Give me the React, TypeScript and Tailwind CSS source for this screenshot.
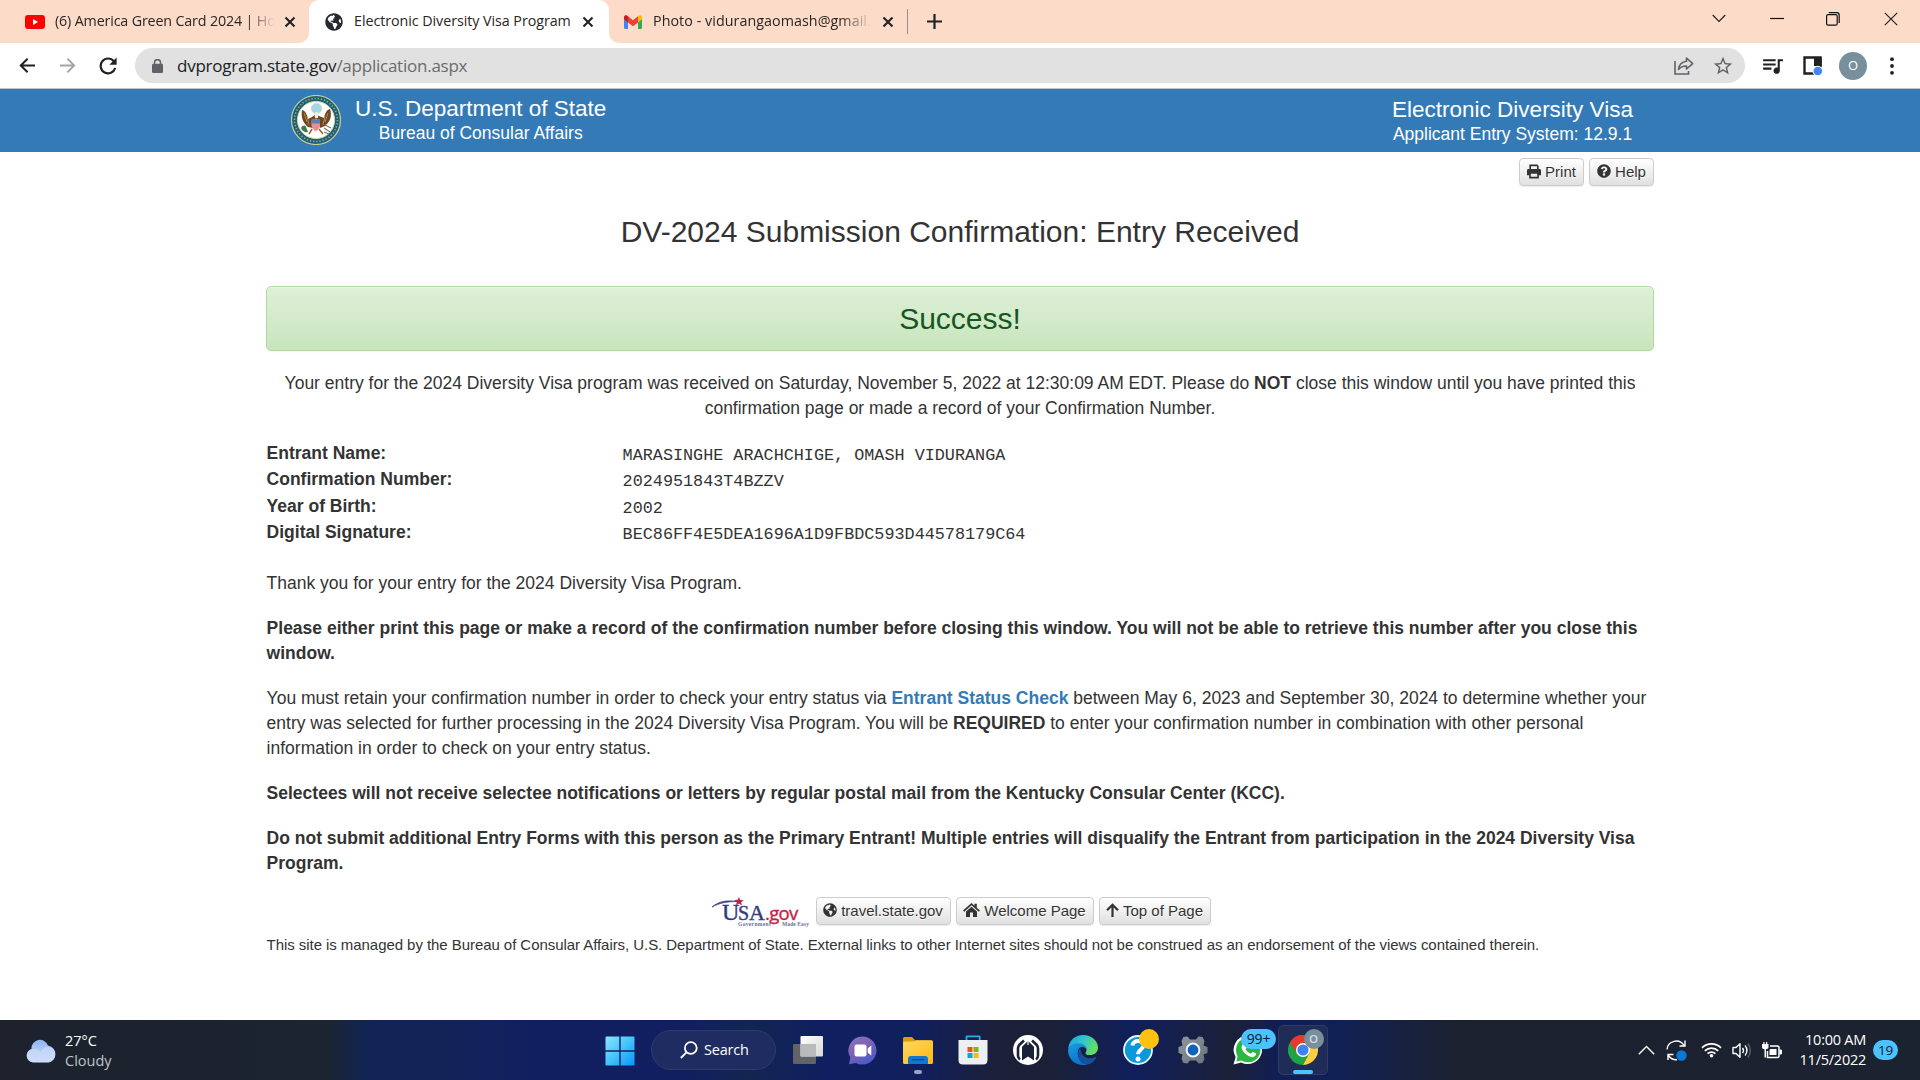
import React from "react";
import type { ReactNode } from "react";
import { FaGlobeAmericas, FaQuestionCircle } from "react-icons/fa";
import { MdOutlineStarBorder, MdQueueMusic } from "react-icons/md";

function CloseX() {
  return (
    <svg width="12" height="12" viewBox="0 0 12 12" className="shrink-0">
      <path d="M1.5 1.5 10.5 10.5M10.5 1.5 1.5 10.5" stroke="#202124" strokeWidth="2.1" />
    </svg>
  );
}

function TabStrip() {
  return (
    <div className="flex h-[43px] w-full bg-[#fddbc9] font-['Open_Sans','Noto_Sans',sans-serif] text-[14.3px] text-[#2b2523]">
      <div className="h-full w-[309px] bg-white">
        <div className="flex h-full items-center rounded-br-[10px] bg-[#fddbc9] pl-[25px]">
          <svg width="20" height="14" viewBox="0 0 20 14" className="shrink-0">
            <rect width="20" height="14" rx="3" fill="#f00" />
            <path d="M8 4v6l5-3z" fill="#fff" />
          </svg>
          <div className="-mt-[2px] ml-[10px] w-[220px] overflow-hidden whitespace-nowrap tracking-[-0.16px] [mask-image:linear-gradient(to_right,black_87%,transparent_100%)]">
            (6) America Green Card 2024 | Ho
          </div>
          <div className="ml-[9px] flex">
            <CloseX />
          </div>
        </div>
      </div>
      <div className="h-full w-[300px] bg-[#fddbc9]">
        <div className="flex h-full items-center rounded-t-[10px] bg-white pl-[16px]">
          <FaGlobeAmericas size={18} color="#27292d" className="shrink-0" />
          <div className="-mt-[2px] ml-[11px] w-[219px] whitespace-nowrap tracking-[-0.06px]">
            Electronic Diversity Visa Program
          </div>
          <div className="ml-[9px] flex">
            <CloseX />
          </div>
        </div>
      </div>
      <div className="h-full w-[299px] bg-white">
        <div className="flex h-full items-center rounded-bl-[10px] bg-[#fddbc9] pl-[15px]">
          <svg width="18" height="14" viewBox="0 0 18 14" className="shrink-0">
            <path d="M0 3v9.5Q0 14 1.4 14H4V5z" fill="#4285f4" />
            <path d="M14 5v9h2.600Q18 14 18 12.500V3z" fill="#34a853" />
            <path d="M14 1.300V7.400l4-3.200V2.200C18 0 16 -.3 14.800 .6z" fill="#fbbc04" />
            <path d="M0 2.200C0 0 2-.3 3.200 .6L4 1.300V7.400L0 4.200z" fill="#c5221f" />
            <path d="M4 1.300 9 5.200 14 1.300V7.400L9 11.200 4 7.400z" fill="#ea4335" />
          </svg>
          <div className="-mt-[2px] ml-[11px] w-[218px] overflow-hidden whitespace-nowrap tracking-[0.05px] [mask-image:linear-gradient(to_right,black_86%,transparent_100%)]">
            Photo - vidurangaomash@gmail.
          </div>
          <div className="ml-[11px] flex">
            <CloseX />
          </div>
          <div className="ml-[13px] h-[25px] w-px bg-[#a08d84]" />
        </div>
      </div>
      <div className="flex grow items-center pl-[19px]">
        <svg width="15" height="15" viewBox="0 0 15 15">
          <path d="M7.500 0V15M0 7.500H15" stroke="#202124" strokeWidth="2.200" />
        </svg>
      </div>
      <div className="flex h-[37px] items-center gap-[44px] pr-[22px]">
        <svg width="14" height="12" viewBox="0 0 14 12" fill="none" stroke="#222" className="ml-[1px]">
          <path d="M.7 2 7 8.300 13.300 2" strokeWidth="1.200" />
        </svg>
        <svg width="14" height="12" viewBox="0 0 14 12">
          <path d="M0 5.500H14" stroke="#111" strokeWidth="1.200" />
        </svg>
        <svg width="14" height="14" viewBox="0 0 14 14" fill="none" stroke="#111" strokeWidth="1.200" className="-ml-[2px]">
          <rect x=".6" y="2.600" width="10.600" height="10.600" rx="1.500" />
          <path d="M2.800 .7H10.800Q13.200 .7 13.200 3.200V11" />
        </svg>
        <svg width="14" height="14" viewBox="0 0 14 14">
          <path d="M.8.8 13.200 13.200M13.200.8.8 13.200" stroke="#222" strokeWidth="1.200" />
        </svg>
      </div>
    </div>
  );
}

function Toolbar() {
  return (
    <div className="flex h-[46px] w-full items-center border-b border-[#c3c6c6] bg-white">
      <svg width="16" height="16" viewBox="0 0 16 16" fill="none" stroke="#202124" strokeWidth="2" className="ml-[19px]">
        <path d="M16 7.500H1.800M8.600.7 1.800 7.500l6.800 6.800" />
      </svg>
      <svg width="16" height="16" viewBox="0 0 16 16" fill="none" stroke="#a2a3a5" strokeWidth="1.800" className="ml-[25px]">
        <path d="M0 7.500H14.200M7.400.7 14.200 7.500l-6.800 6.800" />
      </svg>
      <svg width="18" height="18" viewBox="0 0 18 18" fill="none" className="ml-[23px]">
        <path d="M14.800 4.200A7.400 7.400 0 1 0 16.200 11" stroke="#202124" strokeWidth="2.200" />
        <path d="M17.600 .6V7.800H10.400z" fill="#202124" />
      </svg>
      <div className="ml-[18px] flex h-[35px] w-[1610px] items-center rounded-full bg-[#e1e1e1] pl-[17px]">
        <svg width="11" height="14" viewBox="0 0 11 14">
          <rect y="4.800" width="11" height="9.200" rx="1.300" fill="#5f6368" />
          <path d="M2.500 5.500V3.700a3 3 0 0 1 6 0v1.800" fill="none" stroke="#5f6368" strokeWidth="1.500" />
        </svg>
        <div className="ml-[14px] font-['Open_Sans','Noto_Sans',sans-serif] text-[17px] tracking-[-0.24px] text-[#202124]">
          dvprogram.state.gov<span className="text-[#6a6b6e]">/application.aspx</span>
        </div>
        <svg width="20" height="18" viewBox="0 0 20 18" fill="none" stroke="#5f6368" strokeWidth="1.600" className="ml-auto">
          <path d="M1 4V17H14.500V14" />
          <path d="M12.500 1 18.700 6.700 12.500 12V9C9 9 6.500 10 4.500 12.500 5 8 8 4.800 12.500 4.300z" strokeLinejoin="round" />
        </svg>
        <MdOutlineStarBorder size={22} color="#5f6368" className="ml-[18px] mr-[11px]" />
      </div>
      <MdQueueMusic size={25} color="#202124" className="ml-[15px]" />
      <svg width="20" height="20" viewBox="0 0 20 20" className="ml-[18px]">
        <path d="M1.500 1.500H17.500V17.500H1.500z" fill="none" stroke="#202124" strokeWidth="2.400" />
        <path d="M11 1H18.700V10H11z" fill="#202124" />
        <circle cx="14.800" cy="15" r="5.300" fill="#fff" />
        <circle cx="14.800" cy="15" r="4.300" fill="#4285f4" />
      </svg>
      <div className="ml-[16px] flex h-7 w-7 items-center justify-center rounded-full bg-[#78909c] font-['Open_Sans',sans-serif] text-[13px] text-white">
        O
      </div>
      <svg width="4" height="18" viewBox="0 0 4 18" className="ml-[23px]" fill="#202124">
        <circle cx="2" cy="2.200" r="1.900" />
        <circle cx="2" cy="9" r="1.900" />
        <circle cx="2" cy="15.800" r="1.900" />
      </svg>
    </div>
  );
}

function Seal() {
  return (
    <svg width="50" height="50" viewBox="0 0 50 50">
      <circle cx="25" cy="25" r="24.500" fill="#1f6076" stroke="#c9cf93" strokeWidth="1.200" />
      <circle cx="25" cy="25" r="21.500" fill="none" stroke="#8fae93" strokeWidth="1.600" strokeDasharray="1.300 1.900" />
      <circle cx="25" cy="25" r="18.600" fill="#fff" stroke="#d5d39a" />
      <circle cx="25.500" cy="13.500" r="5.200" fill="#a4d4ea" stroke="#d9dcb4" />
      <path d="M11 15c-1 6 0 12 6 17l5 1 3-10 4 10 5-2c6-5 7-11 5-17-4 1-5 5-6 9l-5-2-3-2-4 3-4 2c-1-4-2-8-6-9z" fill="#6f4623" />
      <path d="M13 18l3 9M37 18l-3 9M16 21l2 9M34 21l-2 9" stroke="#c39a5c" strokeWidth=".8" />
      <path d="M21 34l-3 5M28 34l4 5" stroke="#8b6a2b" strokeWidth="1.500" />
      <path d="M10 33c2-3 4-3 5-1l2 5c-3 1-6-1-7-4z" fill="#3f7a49" />
      <path d="M33 33l6 4M33 37l5 2M34 30l6 3" stroke="#777d76" strokeWidth="1.200" />
      <path d="M20.500 24.500H29V31q-1 4-4.200 5.500Q21.500 35 20.500 31z" fill="#e88f94" />
      <path d="M20.500 24.500H29V28.500H20.500z" fill="#5b7fb3" />
      <path d="M23.500 18l2-1.500 2 1.500-.5 5h-3z" fill="#f0efe2" />
    </svg>
  );
}

function PrintGlyph() {
  return (
    <svg width="14" height="15" viewBox="0 0 15 15">
      <path d="M2.500 0H11L12.500 1.500V5H2.500zM4.300 1.800V5H10.700V1.800z" fill="#333" fillRule="evenodd" />
      <path d="M1.500 4.800H13.500Q15 4.800 15 6.300V11.500H12.700V15H2.300V11.500H0V6.300Q0 4.800 1.500 4.800zM4.100 9.800V13.200H10.900V9.800z" fill="#333" fillRule="evenodd" />
    </svg>
  );
}

function HomeGlyph() {
  return (
    <svg width="17" height="14" viewBox="0 0 17 14" fill="#333">
      <path d="M0 7.600 8.500 0 11.500 2.700V.7h2.300v4L17 7.600l-1.200 1.200L8.500 2.300 1.200 8.800z" />
      <path d="M3 8.500 8.500 3.700 14 8.500V14H10V9.500H7V14H3z" />
    </svg>
  );
}

function ArrowUpGlyph() {
  return (
    <svg width="13" height="14" viewBox="0 0 13 14" fill="none" stroke="#333" strokeWidth="2.200">
      <path d="M6.500 14V1.800M1 7.200 6.500 1.700 12 7.200" />
    </svg>
  );
}

function Btn({ icon, children, className }: { icon: ReactNode; children: ReactNode; className: string }) {
  return (
    <button
      className={`flex h-[28px] shrink-0 items-center justify-center gap-[4px] whitespace-nowrap rounded-[4px] border border-[#ccc] bg-gradient-to-b from-white to-[#e0e0e0] pb-[2px] text-[15px] text-[#333] shadow-[0_1px_1px_rgba(0,0,0,0.075)] [text-shadow:0_1px_0_#fff] ${className}`}
    >
      {icon}
      <span>{children}</span>
    </button>
  );
}

function Row({ label, value }: { label: string; value: string }) {
  return (
    <div className="flex h-[26.25px]">
      <div className="w-[356px] font-bold leading-[25px]">{label}</div>
      <div className="pt-[2px] font-['Liberation_Mono',monospace] text-[16.8px] leading-[25px]">{value}</div>
    </div>
  );
}

function UsaGov() {
  return (
    <svg width="100" height="30" viewBox="0 0 100 30">
      <path d="M1 10C8 4 16 3 26 4.500 16 4.500 8 6 1 10z" fill="#3b4380" stroke="#3b4380" strokeWidth=".8" />
      <path d="M28 0l1.200 3 3.600.3-2.700 2 .9 3.200-3-1.900-3 1.700.8-3.200-2.500-2.200 3.500-.1z" fill="#c41f45" />
      <text y="23" fontFamily="Liberation Serif" fill="#343a7c" stroke="#343a7c" strokeWidth=".4">
        <tspan x="11" fontSize="24">U</tspan>
        <tspan x="27" fontSize="20">S</tspan>
        <tspan x="38" fontSize="22">A</tspan>
        <tspan x="54" fontFamily="Open Sans" fontSize="18.500" fill="#c41f45" stroke="#c41f45" letterSpacing="-.7">.gov</tspan>
      </text>
      <text y="28.500" fontFamily="Liberation Serif" fontWeight="bold" fontSize="5.500" fill="#6a70a0">
        <tspan x="27" letterSpacing=".35">Government</tspan>
        <tspan x="71" letterSpacing=".1">Made Easy</tspan>
      </text>
    </svg>
  );
}

function Page() {
  return (
    <div className="flex h-[931px] w-full flex-col bg-white font-['Liberation_Sans',Arial,sans-serif] text-[17.5px] leading-[25px] text-[#333]">
      <header className="flex h-[63px] w-full shrink-0 items-start bg-[#337ab7] pl-[291px] pr-[287px] text-white">
        <div className="pt-[6px]">
          <Seal />
        </div>
        <div className="ml-[14px] flex flex-col items-center whitespace-nowrap pt-[6px]">
          <div className="text-[22.5px] leading-[27px]">U.S. Department of State</div>
          <div className="leading-[23px]">Bureau of Consular Affairs</div>
        </div>
        <div className="ml-auto flex flex-col items-center whitespace-nowrap pt-[7px]">
          <div className="text-[22.5px] leading-[27px]">Electronic Diversity Visa</div>
          <div className="leading-[23px]">Applicant Entry System: 12.9.1</div>
        </div>
      </header>
      <main className="mx-auto flex w-[1388px] flex-col whitespace-nowrap">
        <div className="mt-[6px] flex justify-end gap-[5px]">
          <Btn icon={<PrintGlyph />} className="w-[65px]">Print</Btn>
          <Btn icon={<FaQuestionCircle size={14} />} className="w-[65px]">Help</Btn>
        </div>
        <h1 className="mt-[29px] text-center text-[30px] leading-[33px]">DV-2024 Submission Confirmation: Entry Received</h1>
        <div className="mt-[38px] flex h-[65px] items-center justify-center rounded-[5px] border border-[#b2dba1] bg-gradient-to-b from-[#dff0d8] to-[#c8e5bc] pb-[1px] text-[30px] text-[#155724] shadow-[inset_0_1px_0_rgba(255,255,255,0.25),0_1px_2px_rgba(0,0,0,0.05)]">
          Success!
        </div>
        <p className="mt-[20px] text-center">
          Your entry for the 2024 Diversity Visa program was received on Saturday, November 5, 2022 at 12:30:09 AM EDT. Please do{" "}
          <b>NOT</b> close this window until you have printed this
          <br />
          confirmation page or made a record of your Confirmation Number.
        </p>
        <div className="mt-[20px] pl-[0.6px]">
          <Row label="Entrant Name:" value="MARASINGHE ARACHCHIGE, OMASH VIDURANGA" />
          <Row label="Confirmation Number:" value="2024951843T4BZZV" />
          <Row label="Year of Birth:" value="2002" />
          <Row label="Digital Signature:" value="BEC86FF4E5DEA1696A1D9FBDC593D44578179C64" />
        </div>
        <div className="pl-[0.6px]">
          <p className="mt-[25px]">Thank you for your entry for the 2024 Diversity Visa Program.</p>
          <p className="mt-[20px] font-bold">
            Please either print this page or make a record of the confirmation number before closing this window. You will not be able to retrieve this number after you close this
            <br />
            window.
          </p>
          <p className="mt-[20px]">
            You must retain your confirmation number in order to check your entry status via{" "}
            <a className="font-bold text-[#337ab7]">Entrant Status Check</a> between May 6, 2023 and September 30, 2024 to determine whether your
            <br />
            entry was selected for further processing in the 2024 Diversity Visa Program. You will be <b>REQUIRED</b> to enter your confirmation number in combination with other personal
            <br />
            information in order to check on your entry status.
          </p>
          <p className="mt-[20px] font-bold">
            Selectees will not receive selectee notifications or letters by regular postal mail from the Kentucky Consular Center (KCC).
          </p>
          <p className="mt-[20px] font-bold">
            Do not submit additional Entry Forms with this person as the Primary Entrant! Multiple entries will disqualify the Entrant from participation in the 2024 Diversity Visa
            <br />
            Program.
          </p>
        </div>
        <div className="mt-[21px] flex items-start justify-center gap-[5px] pl-[1px]">
          <UsaGov />
          <Btn icon={<FaGlobeAmericas size={14} />} className="w-[135px]">travel.state.gov</Btn>
          <Btn icon={<HomeGlyph />} className="w-[138px]">Welcome Page</Btn>
          <Btn icon={<ArrowUpGlyph />} className="w-[112px]">Top of Page</Btn>
        </div>
        <p className="mt-[5px] pl-[0.6px] text-[15px] tracking-[-0.058px]">
          This site is managed by the Bureau of Consular Affairs, U.S. Department of State. External links to other Internet sites should not be construed as an endorsement of the views contained therein.
        </p>
      </main>
    </div>
  );
}

function Cell({ children, className = "" }: { children: ReactNode; className?: string }) {
  return <div className={`relative flex h-[60px] w-[55px] shrink-0 items-center justify-center ${className}`}>{children}</div>;
}

function Cloud() {
  return (
    <svg width="30" height="24" viewBox="0 0 30 24">
      <defs>
        <linearGradient id="cloudA" x1="0" y1="0" x2="0" y2="1">
          <stop offset="0" stopColor="#8fb4f0" />
          <stop offset="1" stopColor="#d7e4fb" />
        </linearGradient>
      </defs>
      <path d="M7 23.500a7 7 0 0 1-1.500-13.500A8.500 8.500 0 0 1 22 6.500 8.700 8.700 0 0 1 23 23.500z" fill="url(#cloudA)" />
      <path d="M7 23a6.500 6.500 0 0 1 0-13c4 0 6 1 8 3 2-4 5-6 8-5a7.700 7.700 0 0 1 0 15z" fill="#c9dafa" opacity=".75" />
    </svg>
  );
}

function Taskbar() {
  return (
    <div className="flex h-[60px] w-full bg-[linear-gradient(90deg,#1d222d_0%,#1b2430_17%,#112453_19%,#11235a_25%,#111f60_28%,#121f5f_36%,#122650_39%,#101f61_43%,#111f5c_48%,#1c2038_52%,#1a2038_55%,#101f5c_59%,#1b2038_64%,#101e58_67%,#112052_70%,#1c212f_76%,#1b2230_100%)] font-['Open_Sans','Noto_Sans',sans-serif] text-white">
      <div className="flex w-[591.5px] items-start pl-[26px]">
        <div className="pt-[19px]">
          <Cloud />
        </div>
        <div className="ml-[9px] pt-[11px] text-[14.500px] leading-[20px] tracking-[0px]">
          <div>27°C</div>
          <div className="text-[#bfc3c9]">Cloudy</div>
        </div>
      </div>
      <Cell>
        <svg width="30" height="30" viewBox="0 0 30 30" className="ml-[1px] mt-[1px]">
          <defs>
            <linearGradient id="winG" x1="0" y1="0" x2="1" y2="1">
              <stop offset="0" stopColor="#8fe3ff" />
              <stop offset=".5" stopColor="#43c4fb" />
              <stop offset="1" stopColor="#0a93fb" />
            </linearGradient>
          </defs>
          <path d="M1.500.5H14.300V14.300H.5V1.500q0-1 1-1zM15.700.5H28.500q1 0 1 1V14.300H15.700zM.5 15.700H14.300V29.500H1.500q-1 0-1-1zM15.700 15.700H29.500V28.500q0 1-1 1H15.700z" fill="url(#winG)" />
        </svg>
      </Cell>
      <div className="mx-[4.500px] mt-[10px] flex h-[40px] w-[125px] shrink-0 items-center rounded-full border border-[#2c3a70] bg-[#1f2c62] pl-[28px] text-[14.500px] tracking-[-0.2px]">
        <svg width="18" height="18" viewBox="0 0 18 18" fill="none" stroke="#fff" strokeWidth="1.800">
          <circle cx="10.800" cy="7" r="5.900" />
          <path d="M6.500 11.300.8 17" />
        </svg>
        <span className="ml-[6px]">Search</span>
      </div>
      <Cell>
        <svg width="30" height="28" viewBox="0 0 30 28">
          <defs>
            <linearGradient id="tv" x1="0" y1="0" x2="1" y2="1">
              <stop offset="0" stopColor="#fff" />
              <stop offset="1" stopColor="#d8d8d8" />
            </linearGradient>
          </defs>
          <rect x="0" y="8" width="23" height="20" rx="1" fill="#626366" />
          <rect x="7.500" y="0" width="22.500" height="20.500" rx="1" fill="url(#tv)" />
          <rect x="7.500" y="8" width="15.500" height="12.500" fill="#b9babb" />
        </svg>
      </Cell>
      <Cell>
        <svg width="29" height="29" viewBox="0 0 29 29" className="-ml-[1px]">
          <defs>
            <linearGradient id="chat" x1="0" y1="0" x2=".6" y2="1">
              <stop offset="0" stopColor="#6f7fd0" />
              <stop offset=".35" stopColor="#8666b0" />
              <stop offset="1" stopColor="#5059c9" />
            </linearGradient>
          </defs>
          <path d="M14.500.5a14 14 0 1 1-6.500 26.400L1 28.300 2.300 21.500A14 14 0 0 1 14.500.5z" fill="url(#chat)" />
          <rect x="6.500" y="8.500" width="12" height="12" rx="2" fill="#fff" />
          <path d="M19.700 12.500 23.300 9.500v10L19.700 16.700z" fill="#fff" />
        </svg>
      </Cell>
      <Cell>
        <svg width="30" height="28" viewBox="0 0 30 28">
          <defs>
            <linearGradient id="fold" x1="0" y1="0" x2="1" y2="1">
              <stop offset="0" stopColor="#ffd863" />
              <stop offset="1" stopColor="#fcb813" />
            </linearGradient>
          </defs>
          <path d="M0 2.500Q0 1 1.500 1H9l3.500 3.500H28V10H0z" fill="#dc9a0c" />
          <path d="M0 7Q0 5.500 2 5.500H11l2-1.300H28.500Q30 4.200 30 5.800V26.500Q30 28 28.500 28H1.500Q0 28 0 26.500z" fill="url(#fold)" />
          <path d="M5 28V23q0-3 3-3H22q3 0 3 3v5z" fill="#1079cf" />
          <path d="M9 23.700H21" stroke="#064a86" strokeWidth="1.200" />
        </svg>
        <span className="absolute bottom-[6px] h-[4px] w-[8px] rounded-full bg-[#9aa3c6]" />
      </Cell>
      <Cell>
        <svg width="30" height="30" viewBox="0 0 30 30">
          <path d="M8.500 6V1.800Q8.500 1.300 9 1.300H21.200q.5 0 .5.500V6" fill="none" stroke="#20aee8" strokeWidth="1.800" />
          <path d="M.5 5H29.500V25q0 4.500-4.500 4.500H5Q.5 29.500.5 25z" fill="#eeeff0" />
          <path d="M9.500 12h5v5h-5z" fill="#f25022" />
          <path d="M15.500 12h5v5h-5z" fill="#7fba00" />
          <path d="M9.500 18h5v5h-5z" fill="#00a4ef" />
          <path d="M15.500 18h5v5h-5z" fill="#ffb900" />
        </svg>
      </Cell>
      <Cell>
        <svg width="30" height="30" viewBox="0 0 30 30">
          <circle cx="15" cy="15" r="15" fill="#fff" />
          <path d="M7 24.500Q5 23 5 20.500V13.500Q5 11.500 6.200 10L11 5.500M23 24.500Q25 23 25 20.500V13.500Q25 11.500 23.800 10L19 5.500" fill="none" stroke="#1b2139" strokeWidth="2.600" />
          <path d="M9 11.800 15 6 21 11.800V25.500L15 21.500 9 25.500z" fill="#1b2139" />
          <path d="M15 5.500V10" stroke="#fff" strokeWidth="1.200" />
        </svg>
      </Cell>
      <Cell>
        <svg width="30" height="30" viewBox="0 0 30 30">
          <defs>
            <linearGradient id="edgeA" x1="0" y1="0" x2="1" y2=".4">
              <stop offset="0" stopColor="#1f9fdc" />
              <stop offset=".5" stopColor="#2fc5cf" />
              <stop offset="1" stopColor="#64dd62" />
            </linearGradient>
            <linearGradient id="edgeB" x1="0" y1="0" x2=".5" y2="1">
              <stop offset="0" stopColor="#1b9de2" />
              <stop offset="1" stopColor="#0c6fd0" />
            </linearGradient>
          </defs>
          <path d="M.3 13.500C1 5.500 7 0 15 0c8.500 0 15 6 15 12.500 0 5-3.800 7.600-8 7.600-4 0-5-1.600-4.200-2.900 2-3-0.300-7-6.300-7.200C6 9.800 2 11.500.3 13.500z" fill="url(#edgeA)" />
          <path d="M.2 14C1.500 9.500 6 8.300 10 8.300c5.500 0 9 3.200 9 6.700-1-2-3-2.900-5-2.900-4 0-4.500 5-4 8 .8 5 4.500 9 9.500 9.300C9 32 -1 24.500.2 14z" fill="url(#edgeB)" />
          <path d="M12.500 13C8.500 16 9.500 29.500 19 29.500c4 0 7.500-3.500 9-6.500.5-1-.2-1.300-1-.8C20.500 25.500 12 21.500 12.500 13z" fill="#11529b" />
        </svg>
      </Cell>
      <Cell>
        <svg width="30" height="30" viewBox="0 0 30 30">
          <circle cx="15" cy="15" r="14" fill="#0c99dc" stroke="#e9f6fd" strokeWidth="1.800" />
          <path d="M9.500 10.500C10 4.500 20.500 4.500 20.500 10.500 20.500 14.500 15 14.500 15 19.300" fill="none" stroke="#fff" strokeWidth="3.800" />
          <circle cx="15" cy="24" r="2.500" fill="#fff" />
        </svg>
        <span className="absolute left-[28px] top-[9px] h-[20px] w-[20px] rounded-full bg-[#ffc20f]" />
      </Cell>
      <Cell>
        <svg width="30" height="28" viewBox="0 0 30 28">
          <defs>
            <linearGradient id="gear" x1="0" y1="0" x2="1" y2="1">
              <stop offset="0" stopColor="#8e979e" />
              <stop offset="1" stopColor="#68727a" />
            </linearGradient>
          </defs>
          <path d="M5.500 1 9.500 .5 12 3.500H18L20.500 .5 24.500 1 26.500 5 25.500 9.500 29.500 11V17L25.500 18.500 26.500 23 24.500 27 20.500 27.500 18 24.500H12L9.500 27.500 5.500 27 3.500 23 4.500 18.500 .5 17V11L4.500 9.500 3.500 5z" fill="url(#gear)" strokeLinejoin="round" />
          <circle cx="15" cy="14" r="6.400" fill="#0e63b8" stroke="#f2f4f5" strokeWidth="2" />
        </svg>
      </Cell>
      <Cell>
        <svg width="30" height="30" viewBox="0 0 30 30">
          <path d="M15 .5a14.300 14.300 0 1 1-6.800 27L.5 29.500 2.600 22A14.300 14.300 0 0 1 15 .5z" fill="#fff" />
          <circle cx="15.200" cy="15" r="12.200" fill="#2bb741" />
          <path d="M3.500 26.500 5 19l6 6z" fill="#2bb741" />
          <path d="M9.500 9.500q2-2.300 3.200 0l1 2.500q.2 1-1.200 2.200 2 3.500 5.300 4.600 1.500-2 2.200-1.900l2.800 1.400q1 1-.9 3-2.500 1.800-6.500-.3-4.500-2.400-6.400-6.500-1-3 .5-5z" fill="#fff" />
        </svg>
        <span className="absolute left-[20.5px] top-[9px] z-10 flex h-[20px] w-[35px] items-center justify-center rounded-full bg-[#4cc2ff] text-[14px] leading-none tracking-[-0.2px] text-[#0c1a2c]">
          99+
        </span>
      </Cell>
      <Cell>
        <div className="flex h-[50px] w-[50px] items-center justify-center rounded-[5px] border border-[#303c68] bg-[#202c58]">
          <svg width="30" height="30" viewBox="0 0 30 30">
            <path d="M15 15 2 7.500A15 15 0 0 1 28 7.500z" fill="#e33b2e" />
            <path d="M15 15 2 7.500A15 15 0 0 0 15 30L21.500 18.700z" fill="#1ea446" />
            <path d="M15 8.200H28.400A15 15 0 0 1 15 30L21.500 18z" fill="#ffcd40" />
            <path d="M2 7.500A15 15 0 0 1 28.300 8.200H15L9 18.500z" fill="#e33b2e" />
            <circle cx="15" cy="15" r="7" fill="#fff" />
            <circle cx="15" cy="15" r="5.600" fill="#3f82f2" />
          </svg>
        </div>
        <span className="absolute left-[28px] top-[9px] flex h-[20px] w-[20px] items-center justify-center rounded-full bg-[#78909c] text-[11.500px] font-semibold leading-none text-[#d5dde1]">
          O
        </span>
        <span className="absolute bottom-[6px] h-[4px] w-[20px] rounded-full bg-[#4cc2ff]" />
      </Cell>
      <div className="ml-auto flex items-center pr-[22px]">
        <svg width="17" height="10" viewBox="0 0 17 10" fill="none" stroke="#fff" strokeWidth="1.400">
          <path d="M.8 9.200 8.500 1.500 16.200 9.200" />
        </svg>
        <svg width="21" height="21" viewBox="0 0 21 21" fill="none" stroke="#fff" strokeWidth="1.400" className="ml-[11px]">
          <path d="M1 9.500A9.200 9.200 0 0 1 18 5.500M19 .5V6H13.500" />
          <path d="M2 20V14.500H7.500M2.500 15.500A9.500 9.500 0 0 0 11 19.800" />
          <circle cx="15.500" cy="15.500" r="5.200" fill="#0a78d8" stroke="none" />
        </svg>
        <svg width="21" height="16" viewBox="0 0 21 16" fill="none" stroke="#fff" strokeWidth="1.700" className="ml-[14px]">
          <path d="M1 5.800a13.500 13.500 0 0 1 19 0M3.800 8.800a9.500 9.500 0 0 1 13.400 0M6.600 11.700a5.500 5.500 0 0 1 7.800 0" />
          <circle cx="10.500" cy="13.700" r="1.800" fill="#fff" stroke="none" />
        </svg>
        <svg width="20" height="17" viewBox="0 0 20 17" fill="none" stroke="#fff" strokeWidth="1.400" className="ml-[10px]">
          <path d="M1 5.500H4L8 1.800V15.200L4 11.500H1z" strokeLinejoin="round" />
          <path d="M10.500 6a4 4 0 0 1 0 5M13 3.500a7.500 7.500 0 0 1 0 10" />
          <path d="M15.800 1.500a11 11 0 0 1 0 14" stroke="#5b6069" />
        </svg>
        <svg width="20" height="17" viewBox="0 0 20 17" className="ml-[10px]">
          <path d="M0 2H1.300V0H2.500V2H4V0H5.200V2H6.500V5.500Q6.500 7 4 7.300V15.500H2.500V7.300Q0 7 0 5.500z" fill="#fff" />
          <path d="M8 4H15.500Q17 4 17 5.500V14Q17 15.500 15.500 15.500H5.500V9" fill="none" stroke="#fff" strokeWidth="1.500" />
          <path d="M8.500 7H14.500V13H7.500V8z" fill="#fff" />
          <path d="M18 8h1.500v4H18z" fill="#fff" stroke="#fff" />
        </svg>
        <div className="-mt-[1px] ml-[18px] w-[66px] whitespace-nowrap text-right text-[14.500px] leading-[20px] tracking-[-0.25px]">
          <div className="-ml-4">10:00 AM</div>
          <div className="-ml-4">11/5/2022</div>
        </div>
        <div className="ml-[7px] flex h-[20px] w-[25px] items-center justify-center rounded-full bg-[#4cc2ff] text-[13.500px] tracking-[-0.3px] text-[#0c1a2c]">
          19
        </div>
      </div>
    </div>
  );
}

export default function App() {
  return (
    <div className="flex h-[1080px] w-[1920px] flex-col overflow-hidden bg-white">
      <TabStrip />
      <Toolbar />
      <Page />
      <Taskbar />
    </div>
  );
}
